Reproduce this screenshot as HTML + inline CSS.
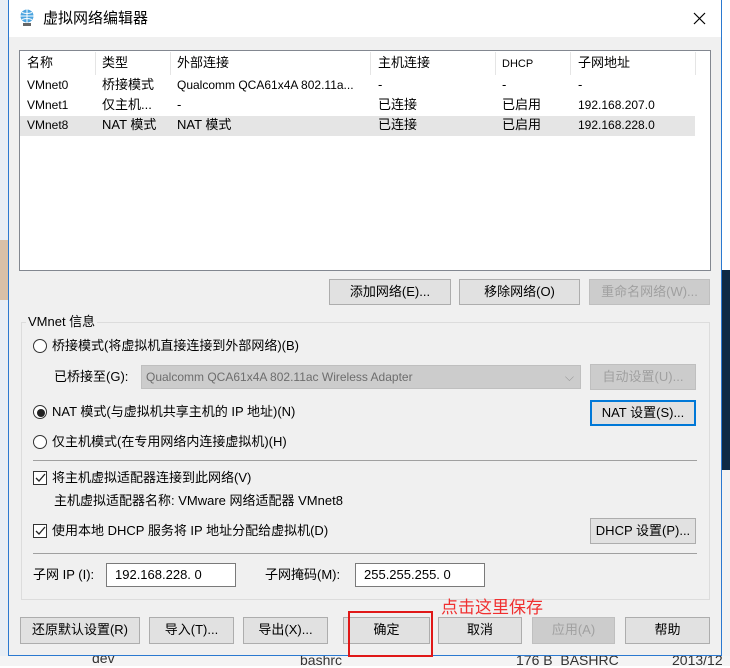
<!DOCTYPE html>
<html><head><meta charset="utf-8"><style>
*{margin:0;padding:0;box-sizing:border-box}
body{width:730px;height:666px;overflow:hidden;background:#fff;position:relative;font-family:"Liberation Sans","Noto Sans CJK SC",sans-serif;font-size:13px;color:#000}
.a{position:absolute;white-space:nowrap}
.t{position:absolute;white-space:nowrap;line-height:18px;height:18px}
.btn{position:absolute;background:#e1e1e1;border:1px solid #adadad;text-align:center;font-size:13px;line-height:23px}
.dis{color:#a0a0a0;background:#ccc;border-color:#bfbfbf}
.rad{position:absolute;width:14px;height:14px;border:1px solid #333;border-radius:50%;background:#fff}
.chk{position:absolute;width:14px;height:14px;border:1px solid #333;background:#fff}
.inp{position:absolute;background:#fff;border:1px solid #7a7a7a;height:24px;line-height:22px;padding-left:8px}
</style></head><body>
<div class="a" style="left:0;top:0;width:8px;height:666px;background:#e8eef5"></div>
<div class="a" style="left:0;top:240px;width:8px;height:60px;background:#d8c0a8"></div>
<div class="a" style="left:722px;top:270px;width:8px;height:200px;background:#0e2a44"></div>
<div class="a" style="left:722px;top:470px;width:8px;height:196px;background:#f2f2f2"></div>
<div class="a" style="left:0;top:656px;width:730px;height:10px;background:#f4f4f4"></div>
<div class="a" style="left:92px;top:650px;font-size:14px;color:#333">dev</div>
<div class="a" style="left:300px;top:652px;font-size:14px;color:#333">bashrc</div>
<div class="a" style="left:516px;top:652px;font-size:14px;color:#333">176 B&nbsp; BASHRC</div>
<div class="a" style="left:672px;top:652px;font-size:14px;color:#333">2013/12</div>
<div class="a" style="left:8px;top:0;width:714px;height:656px;background:#f0f0f0;border:1px solid #2b79d0;border-top:none"></div>
<div class="a" style="left:9px;top:0;width:712px;height:37px;background:#fff"></div>
<svg class="a" style="left:19px;top:9px" width="16" height="18" viewBox="0 0 16 18"><circle cx="8" cy="7" r="6.5" fill="#4aa3df"/><path d="M1.5 7h13M8 .5v13M3 3.5q5 2 10 0M3 10.5q5-2 10 0" stroke="#fff" stroke-width="1" fill="none"/><rect x="4" y="14" width="8" height="3" fill="#666"/></svg>
<div class="t" style="left:43px;top:10px;font-size:15px">虚拟网络编辑器</div>
<svg class="a" style="left:693px;top:12px" width="13" height="13"><path d="M1 1L12 12M12 1L1 12" stroke="#000" stroke-width="1.2"/></svg>
<div class="a" style="left:19px;top:50px;width:692px;height:221px;background:#fff;border:1px solid #828790"></div>
<div class="a" style="left:20px;top:116px;width:675px;height:20px;background:#e5e5e5"></div>
<div class="a" style="left:95px;top:52px;width:1px;height:23px;background:#e5e5e5"></div>
<div class="a" style="left:170px;top:52px;width:1px;height:23px;background:#e5e5e5"></div>
<div class="a" style="left:370px;top:52px;width:1px;height:23px;background:#e5e5e5"></div>
<div class="a" style="left:495px;top:52px;width:1px;height:23px;background:#e5e5e5"></div>
<div class="a" style="left:570px;top:52px;width:1px;height:23px;background:#e5e5e5"></div>
<div class="a" style="left:695px;top:52px;width:1px;height:23px;background:#e5e5e5"></div>
<div class="t" style="left:27px;top:54px">名称</div><div class="t" style="left:102px;top:54px">类型</div><div class="t" style="left:177px;top:54px">外部连接</div><div class="t" style="left:378px;top:54px">主机连接</div><div class="t" style="left:502px;top:55px;font-size:11px">DHCP</div><div class="t" style="left:578px;top:54px">子网地址</div>
<div class="t" style="left:27px;top:76px;font-size:12px">VMnet0</div><div class="t" style="left:102px;top:76px">桥接模式</div><div class="t" style="left:177px;top:76px;font-size:12px">Qualcomm QCA61x4A 802.11a...</div><div class="t" style="left:378px;top:76px">-</div><div class="t" style="left:502px;top:76px">-</div><div class="t" style="left:578px;top:76px">-</div>
<div class="t" style="left:27px;top:96px;font-size:12px">VMnet1</div><div class="t" style="left:102px;top:96px">仅主机...</div><div class="t" style="left:177px;top:96px">-</div><div class="t" style="left:378px;top:96px">已连接</div><div class="t" style="left:502px;top:96px">已启用</div><div class="t" style="left:578px;top:96px;font-size:12px">192.168.207.0</div>
<div class="t" style="left:27px;top:116px;font-size:12px">VMnet8</div><div class="t" style="left:102px;top:116px">NAT 模式</div><div class="t" style="left:177px;top:116px">NAT 模式</div><div class="t" style="left:378px;top:116px">已连接</div><div class="t" style="left:502px;top:116px">已启用</div><div class="t" style="left:578px;top:116px;font-size:12px">192.168.228.0</div>
<div class="btn" style="left:329px;top:279px;width:122px;height:26px">添加网络(E)...</div>
<div class="btn" style="left:459px;top:279px;width:121px;height:26px">移除网络(O)</div>
<div class="btn dis" style="left:589px;top:279px;width:121px;height:26px">重命名网络(W)...</div>
<div class="a" style="left:21px;top:322px;width:689px;height:278px;border:1px solid #dcdcdc"></div>
<div class="t" style="left:26px;top:313px;background:#f0f0f0;padding:0 2px">VMnet 信息</div>
<div class="rad" style="left:33px;top:339px"></div><div class="t" style="left:52px;top:337px">桥接模式(将虚拟机直接连接到外部网络)(B)</div>
<div class="t" style="left:54px;top:368px">已桥接至(G):</div>
<div class="a" style="left:141px;top:365px;width:440px;height:24px;background:#ccc;border:1px solid #bfbfbf;color:#6d6d6d;padding-left:4px;line-height:22px;font-size:12px">Qualcomm QCA61x4A 802.11ac Wireless Adapter<span style="position:absolute;right:6px;color:#999">⌵</span></div>
<div class="btn dis" style="left:590px;top:364px;width:106px;height:26px">自动设置(U)...</div>
<div class="rad" style="left:33px;top:405px"></div><div class="a" style="left:37px;top:409px;width:8px;height:8px;border-radius:50%;background:#222"></div><div class="t" style="left:52px;top:403px">NAT 模式(与虚拟机共享主机的 IP 地址)(N)</div>
<div class="btn" style="left:590px;top:400px;width:106px;height:26px;border:2px solid #0078d7;line-height:21px">NAT 设置(S)...</div>
<div class="rad" style="left:33px;top:435px"></div><div class="t" style="left:52px;top:433px">仅主机模式(在专用网络内连接虚拟机)(H)</div>
<div class="a" style="left:33px;top:460px;width:664px;height:1px;background:#a0a0a0"></div>
<div class="chk" style="left:33px;top:471px"></div><svg class="a" style="left:35px;top:473px" width="11" height="10"><path d="M1 5l3 3 6-7" stroke="#222" stroke-width="1.3" fill="none"/></svg><div class="t" style="left:52px;top:469px">将主机虚拟适配器连接到此网络(V)</div>
<div class="t" style="left:54px;top:492px">主机虚拟适配器名称: VMware 网络适配器 VMnet8</div>
<div class="chk" style="left:33px;top:524px"></div><svg class="a" style="left:35px;top:526px" width="11" height="10"><path d="M1 5l3 3 6-7" stroke="#222" stroke-width="1.3" fill="none"/></svg><div class="t" style="left:52px;top:522px">使用本地 DHCP 服务将 IP 地址分配给虚拟机(D)</div>
<div class="btn" style="left:590px;top:518px;width:106px;height:26px">DHCP 设置(P)...</div>
<div class="a" style="left:33px;top:553px;width:664px;height:1px;background:#a0a0a0"></div>
<div class="t" style="left:33px;top:566px">子网 IP (I):</div>
<div class="inp" style="left:106px;top:563px;width:130px">192.168.228. 0</div>
<div class="t" style="left:265px;top:566px">子网掩码(M):</div>
<div class="inp" style="left:355px;top:563px;width:130px">255.255.255. 0</div>
<div class="a" style="left:441px;top:593px;font-size:17px;color:#f03030">点击这里保存</div>
<div class="btn" style="left:20px;top:617px;width:120px;height:27px">还原默认设置(R)</div>
<div class="btn" style="left:149px;top:617px;width:85px;height:27px">导入(T)...</div>
<div class="btn" style="left:243px;top:617px;width:85px;height:27px">导出(X)...</div>
<div class="btn" style="left:343px;top:617px;width:87px;height:27px">确定</div>
<div class="btn" style="left:438px;top:617px;width:84px;height:27px">取消</div>
<div class="btn dis" style="left:532px;top:617px;width:83px;height:27px">应用(A)</div>
<div class="btn" style="left:625px;top:617px;width:85px;height:27px">帮助</div>
<div class="a" style="left:348px;top:611px;width:85px;height:46px;border:2px solid #e01818"></div>
</body></html>
